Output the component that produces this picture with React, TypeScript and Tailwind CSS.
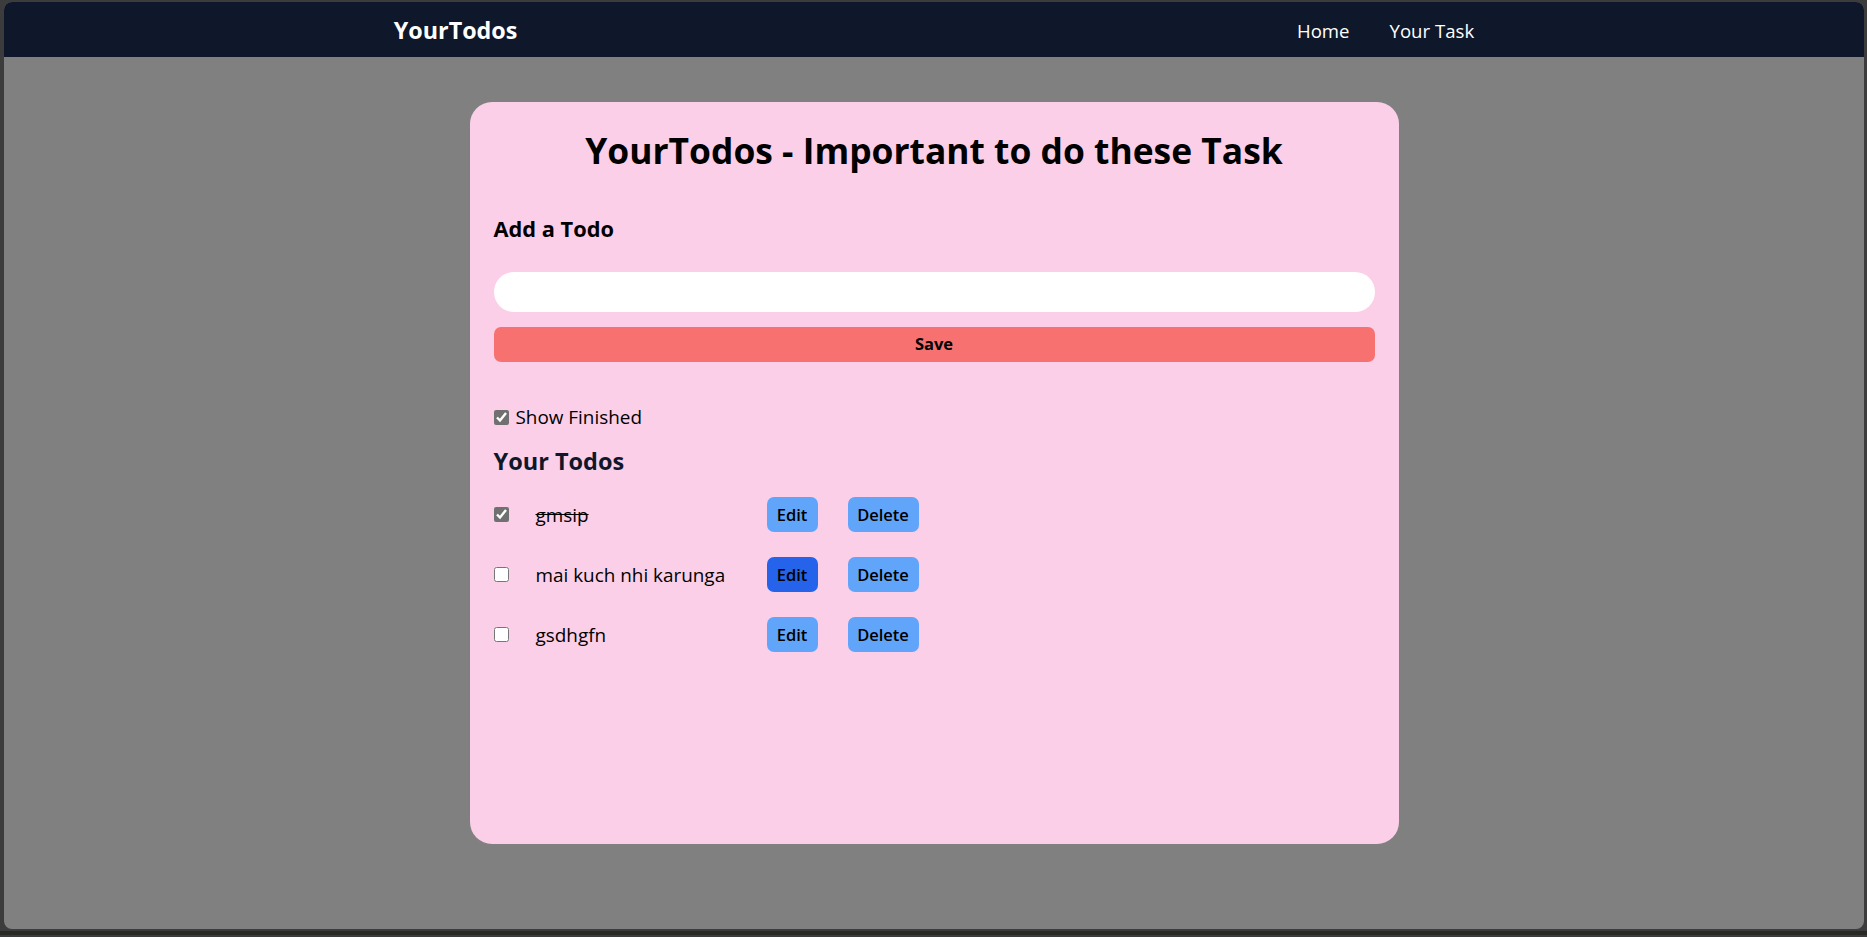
import { useState } from 'react';

const initialTodos = [
  { id: 1, todo: 'gmsip', isCompleted: true },
  { id: 2, todo: 'mai kuch nhi karunga', isCompleted: false },
  { id: 3, todo: 'gsdhgfn', isCompleted: false },
];

function Navbar() {
  return (
    <nav className="flex justify-around items-center h-[55px] pt-[3px] bg-[#0f172a] text-white shrink-0">
      <div className="text-[23.3px] font-bold leading-none">YourTodos</div>
      <ul className="flex gap-[40px] text-[18.6px] leading-none">
        <li className="cursor-pointer">Home</li>
        <li className="cursor-pointer">Your Task</li>
      </ul>
    </nav>
  );
}

export default function App() {
  const [todos, setTodos] = useState(initialTodos);
  const [todo, setTodo] = useState('');
  const [showFinished, setShowFinished] = useState(true);

  const toggle = (id: number) =>
    setTodos(todos.map((t) => (t.id === id ? { ...t, isCompleted: !t.isCompleted } : t)));

  return (
    <div className="w-full h-[937px] bg-[#3c3c3c] flex flex-col font-['Open_Sans',sans-serif] overflow-hidden">
      {/* browser window */}
      <div className="mt-[2px] ml-[4px] mr-[3px] h-[927px] rounded-[8px] overflow-hidden bg-[#808080] flex flex-col">
        <Navbar />

        {/* Card */}
        <div className="mx-auto mt-[45px] w-[929px] min-h-[742px] rounded-[22px] bg-[#fbcfe8] pt-[26px] px-[24px]">
          <h1 className="text-[35.4px] font-bold leading-[45px] h-[45px] text-center text-black">
            YourTodos - Important to do these Task
          </h1>

          <div className="mt-[38px] flex flex-col">
            <h2 className="text-[21.8px] font-bold leading-[35px] text-black">Add a Todo</h2>
            <input
              value={todo}
              onChange={(e) => setTodo(e.target.value)}
              type="text"
              className="mt-[26px] h-[40px] w-full rounded-full bg-white px-[20px] outline-none text-[19px]"
            />
            <button className="mt-[15px] h-[35px] w-full rounded-[7px] bg-[#f87171] text-[16.5px] font-bold text-black">
              Save
            </button>
          </div>

          <label className="mt-[40px] flex items-center gap-[7px] h-[30px] text-[18.9px] text-black">
            <input
              type="checkbox"
              checked={showFinished}
              onChange={() => setShowFinished(!showFinished)}
              className="m-0 w-[15px] h-[15px] accent-[#707070]"
            />
            Show Finished
          </label>

          <h2 className="mt-[12px] text-[23.5px] font-bold leading-[35px] text-[#0f172a]">Your Todos</h2>

          <div className="mt-[18px] flex flex-col gap-[25px]">
            {todos
              .filter((t) => showFinished || !t.isCompleted)
              .map((t) => (
                <div key={t.id} className="flex items-center h-[35px]">
                  <input
                    type="checkbox"
                    checked={t.isCompleted}
                    onChange={() => toggle(t.id)}
                    className="m-0 w-[15px] h-[15px] accent-[#707070]"
                  />
                  <div
                    className={
                      t.isCompleted
                        ? 'ml-[27px] w-[231px] text-[18.9px] leading-[30px] text-black line-through'
                        : 'ml-[27px] w-[231px] text-[18.9px] leading-[30px] text-black'
                    }
                  >
                    {t.todo}
                  </div>
                  <button
                    className={
                      t.id === 2
                        ? 'h-[35px] w-[51px] rounded-[7px] bg-[#2563eb] text-[16.5px] font-semibold leading-[25px] text-black'
                        : 'h-[35px] w-[51px] rounded-[7px] bg-[#60a5fa] text-[16.5px] font-semibold leading-[25px] text-black'
                    }
                  >
                    Edit
                  </button>
                  <button className="ml-[30px] h-[35px] w-[71px] rounded-[7px] bg-[#60a5fa] text-[16.5px] font-semibold leading-[25px] text-black">
                    Delete
                  </button>
                </div>
              ))}
          </div>
        </div>
      </div>
      <div className="h-[4px] mt-[2px] bg-[#2a2925]" />
    </div>
  );
}
